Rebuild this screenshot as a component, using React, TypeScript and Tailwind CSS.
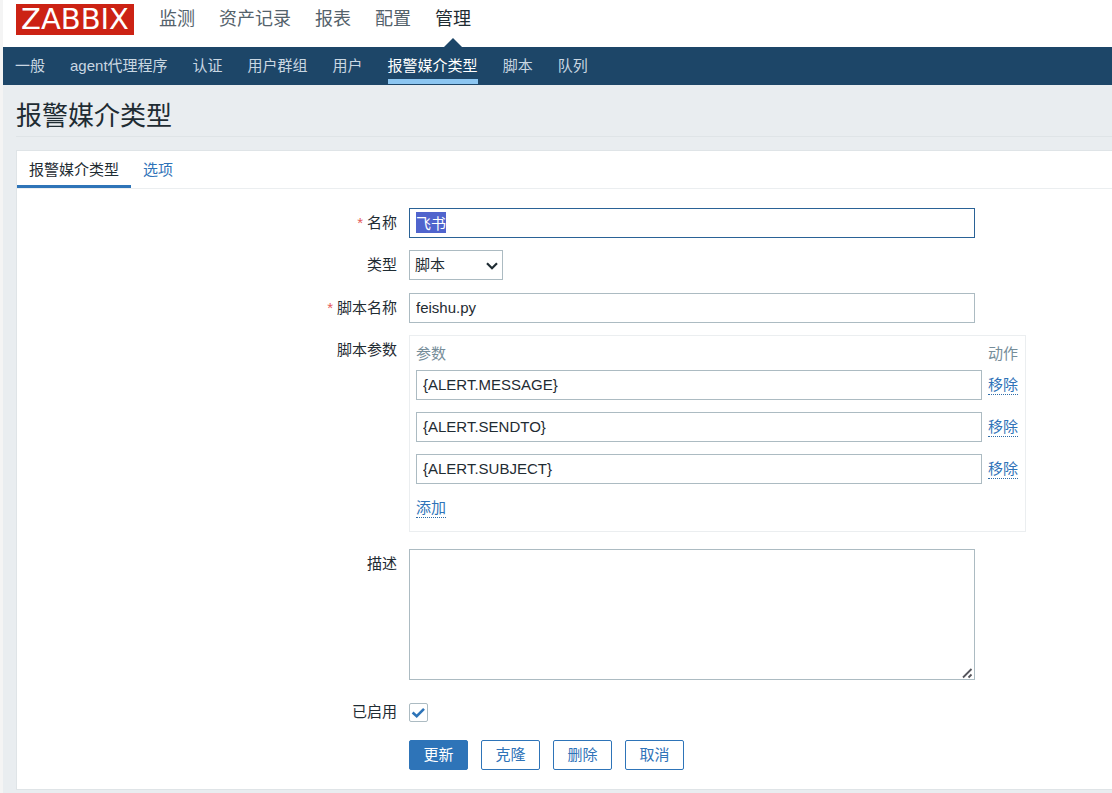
import { useEffect, useRef, type ReactNode } from "react";
import clsx from "clsx";

const MAIN_MENU = ["监测", "资产记录", "报表", "配置", "管理"];
const SUB_MENU = ["一般", "agent代理程序", "认证", "用户群组", "用户", "报警媒介类型", "脚本", "队列"];
const PARAMS = ["{ALERT.MESSAGE}", "{ALERT.SENDTO}", "{ALERT.SUBJECT}"];

const FIELD =
  "max-w-full border border-[#acbbc2] bg-white text-[#1f2c33] outline-none focus:border-[#2a6296]";
const TEXT_FIELD = "block h-[30px] px-1.5 pb-0.5";

function Row({
  label,
  htmlFor,
  required,
  className,
  children,
}: {
  label?: string;
  htmlFor?: string;
  required?: boolean;
  className?: string;
  children: ReactNode;
}) {
  return (
    <div className={clsx("grid grid-cols-[380px_minmax(0,1fr)] gap-3", className)}>
      <div className="text-right leading-[30px]">
        {label && (
          <label htmlFor={htmlFor}>
            {required && <span className="mr-1 text-[#e45959]">*</span>}
            {label}
          </label>
        )}
      </div>
      <div>{children}</div>
    </div>
  );
}

function DottedLink({ children }: { children: ReactNode }) {
  return (
    <button
      type="button"
      className="block border-b border-dotted border-[#2e6ca8] leading-[19px] text-[#2f73b8]"
    >
      {children}
    </button>
  );
}

function Header() {
  return (
    <header>
      <div className="flex h-[47px] items-start bg-white pl-[13px]">
        <a
          href="#"
          className="mt-1 flex h-[31px] w-[118px] items-center justify-center bg-[#cc2214] font-['DejaVu_Sans',sans-serif] text-[29px] leading-none text-white"
        >
          ZABBIX
        </a>
        <nav className="ml-[25px] flex h-full gap-6 text-lg">
          {MAIN_MENU.map((item) => {
            const active = item === "管理";
            return (
              <a
                key={item}
                href="#"
                className={clsx("relative h-full leading-[38px]", active ? "text-[#1f2c33]" : "text-[#54626b]")}
              >
                {item}
                {active && (
                  <span className="absolute bottom-0 left-1/2 -translate-x-1/2 border-x-9 border-b-9 border-x-transparent border-b-[#1d4668]" />
                )}
              </a>
            );
          })}
        </nav>
      </div>
      <nav className="flex h-[38px] gap-[25px] bg-[#1d4668] pl-3">
        {SUB_MENU.map((item) => (
          <a
            key={item}
            href="#"
            className={clsx(
              "mb-px border-b-5 leading-[38px]",
              item === "报警媒介类型" ? "border-[#8cc6f1] text-white" : "border-transparent text-[#c9d7e2]",
            )}
          >
            {item}
          </a>
        ))}
      </nav>
    </header>
  );
}

export default function App() {
  const nameRef = useRef<HTMLInputElement>(null);

  // the name is focused and preselected when the form opens
  useEffect(() => {
    nameRef.current?.focus();
    nameRef.current?.select();
  }, []);

  return (
    <div className="min-h-screen border-l-3 border-[#f4f4f4] bg-[#e9edf0] font-['Liberation_Sans','Noto_Sans_CJK_SC',sans-serif] text-[15px] text-[#1f2c33]">
      <Header />
      <main className="pb-1 pl-[13px]">
        <h1 className="mb-[13px] border-b border-[#dfe4e7] pt-3 text-[26px] leading-[39px]">
          报警媒介类型
        </h1>
        <form className="border border-r-0 border-[#dfe4e7] bg-white" onSubmit={(e) => e.preventDefault()}>
          <div className="flex h-[38px] border-b border-[#ebeef0]">
            <a href="#" className="border-b-3 border-[#2e74b8] px-3 leading-[38px]">
              报警媒介类型
            </a>
            <a href="#" className="px-3 leading-[38px] text-[#2f73b8]">
              选项
            </a>
          </div>

          <div className="pt-[19px] pb-[19px]">
            <Row label="名称" htmlFor="name" required>
              <input
                ref={nameRef}
                id="name"
                defaultValue="飞书"
                className={clsx(FIELD, TEXT_FIELD, "w-[566px] selection:bg-[#5064cd] selection:text-white")}
              />
            </Row>
            <Row label="类型" htmlFor="type" className="mt-3">
              <div className="relative w-[94px]">
                <select id="type" className={clsx(FIELD, "block h-[30px] w-full appearance-none px-[5px]")}>
                  <option>脚本</option>
                </select>
                <svg
                  viewBox="0 0 12 8"
                  className="pointer-events-none absolute top-3 right-[5px] h-2 w-3"
                >
                  <path d="m1 1.2 5 5 5-5" fill="none" stroke="#1f2c33" strokeWidth="2.2" />
                </svg>
              </div>
            </Row>
            <Row label="脚本名称" htmlFor="script" required className="mt-[13px]">
              <input id="script" defaultValue="feishu.py" className={clsx(FIELD, TEXT_FIELD, "w-[566px]")} />
            </Row>
            <Row label="脚本参数" className="mt-3">
              <div className="w-[617px] max-w-full border border-[#ebeef0] px-1.5 pb-[11px]">
                <table className="w-full">
                  <thead>
                    <tr className="h-[34px] text-left text-[#768d99]">
                      <th className="pt-0.5 font-normal">参数</th>
                      <th className="w-[37px] pt-0.5 pl-1.5 font-normal">动作</th>
                    </tr>
                  </thead>
                  <tbody>
                    {PARAMS.map((param) => (
                      <tr key={param}>
                        <td className="pb-3">
                          <input
                            aria-label="参数"
                            defaultValue={param}
                            className={clsx(FIELD, TEXT_FIELD, "w-full")}
                          />
                        </td>
                        <td className="pb-3 pl-1.5">
                          <DottedLink>移除</DottedLink>
                        </td>
                      </tr>
                    ))}
                    <tr className="h-6">
                      <td colSpan={2}>
                        <DottedLink>添加</DottedLink>
                      </td>
                    </tr>
                  </tbody>
                </table>
              </div>
            </Row>
            <Row label="描述" htmlFor="description" className="mt-[17px]">
              <div className="relative w-fit max-w-full">
                <textarea id="description" className={clsx(FIELD, "block h-[131px] w-[566px] px-1.5 py-1")} />
                {/* heavier grip over the native resize handle */}
                <svg
                  viewBox="0 0 12 12"
                  className="pointer-events-none absolute right-px bottom-px size-3 bg-white"
                >
                  <path d="M1 10.5 9.5 2M6.5 10.5 9.5 7.5" fill="none" stroke="#55555c" strokeWidth="1.8" />
                </svg>
              </div>
            </Row>
            <Row label="已启用" htmlFor="enabled" className="mt-[17px]">
              <div className="relative flex h-[30px] w-[19px] items-center">
                <input
                  id="enabled"
                  type="checkbox"
                  defaultChecked
                  className="peer size-[19px] appearance-none rounded-xs border border-[#acbbc2] bg-white"
                />
                <svg
                  viewBox="0 0 19 19"
                  className="pointer-events-none invisible absolute left-0 size-[19px] peer-checked:visible"
                >
                  <path d="M3.6 9.5 7.7 13.2 15 5.8" fill="none" stroke="#2e74b8" strokeWidth="2.6" />
                </svg>
              </div>
            </Row>
            <Row className="mt-[13px]">
              <div className="flex gap-[13px]">
                {["更新", "克隆", "删除", "取消"].map((text, i) => (
                  <button
                    key={text}
                    type="button"
                    className={clsx(
                      "h-[30px] w-[59px] rounded-xs border border-[#2e74b8]",
                      i === 0 ? "bg-[#2e74b8] text-white" : "bg-white text-[#2f73b8]",
                    )}
                  >
                    {text}
                  </button>
                ))}
              </div>
            </Row>
          </div>
        </form>
      </main>
    </div>
  );
}
